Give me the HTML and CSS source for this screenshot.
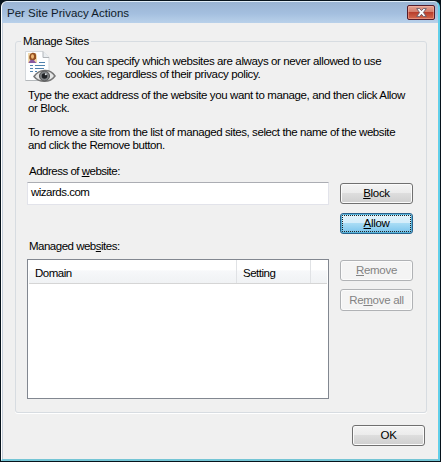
FILE: index.html
```html
<!DOCTYPE html>
<html lang="en">
<head>
<meta charset="utf-8">
<title>Per Site Privacy Actions</title>
<link rel="stylesheet" href="styles.css">
</head>
<body>
<div class="window">
  <header class="titlebar">
    <h1>Per Site Privacy Actions</h1>
    <button class="close" aria-label="Close">
      <svg width="11" height="9" viewBox="0 0 11 9"><path d="M.7.6h3L5.5 2.7 7.3.6h3L7.400 4.500l2.900 3.900h-3L5.500 6.300 3.700 8.400h-3l2.900-3.900z" fill="#fff" stroke="#655765" stroke-width=".9"/></svg>
    </button>
  </header>
  <main>
    <fieldset class="group">
      <legend>Manage Sites</legend>
      <div class="intro">
        <svg class="doc" width="32" height="34" viewBox="0 0 32 34">
          <path d="M.5 1.500h17.500l6 6v23H.5z" fill="#fdfeff" stroke="#d4d8dc"/>
          <path d="M18 1.500v6h6" fill="#e9edf0" stroke="#b0b4b8"/>
          <path d="M.5 30.500h22" stroke="#b4b8bb"/>
          <path d="M3 13V3h8l1 3v7z" fill="#f0d9ad"/>
          <path d="M4.500 9C3 2 10.500 1 11 5v3.500L9 10.500H6z" fill="#955022"/>
          <ellipse cx="7.500" cy="6.500" rx="1.500" ry="2.200" fill="#efb978"/>
          <path d="M3.500 13c1-3 3-4 5-3l3 3z" fill="#8758a0"/>
          <path d="M14 12.500h6M10 15.500h10M10 18.500h9M10 21.500h2M5 15.500h3M5 18.500h3M5 21.500h3" stroke="#4e82ae"/>
          <path d="M9 26.500c5-7.500 16-8.500 21-.5-5 7-16 7-21 .5z" fill="#e6e7e7" stroke="#777" stroke-width="1.500"/>
          <circle cx="19.500" cy="26" r="5" fill="#7c8083" stroke="#555"/>
          <circle cx="19.500" cy="26" r="2.800" fill="#202326"/>
          <circle cx="20.800" cy="24.300" r="1" fill="#dfe3e5"/>
        </svg>
        <p>You can specify which websites are always or never allowed to use<br>cookies, regardless of their privacy policy.</p>
      </div>
      <p class="type">Type the exact address of the website you want to manage, and then click Allow<br>or Block.</p>
      <p class="remove">To remove a site from the list of managed sites, select the name of the website<br>and click the Remove button.</p>
      <div class="columns">
        <div class="fields">
          <label>Address of <u>w</u>ebsite:</label>
          <div class="input">wizards.com</div>
          <label class="managed">Managed web<u>s</u>ites:</label>
          <div class="list">
            <div class="head">
              <div class="domain">Domain</div>
              <div class="setting">Setting</div>
              <div class="rest"></div>
            </div>
          </div>
        </div>
        <div class="actions">
          <button class="btn"><u>B</u>lock</button>
          <button class="btn allow"><u>A</u>llow</button>
          <button class="btn disabled first" disabled><u>R</u>emove</button>
          <button class="btn disabled all" disabled>Re<u>m</u>ove all</button>
        </div>
      </div>
    </fieldset>
    <footer><button class="btn">OK</button></footer>
  </main>
</div>
</body>
</html>
```
FILE: styles.css
```css
* { box-sizing: border-box; }
body {
  margin: 0;
  background: #07131c;
  font: 11.5px/13px "Liberation Sans", Arial, sans-serif;
  letter-spacing: -.38px;
  color: #000;
  overflow: hidden;
}
p, h1 { margin: 0; font: inherit; white-space: nowrap; }
u { text-decoration: underline; text-underline-offset: 1px; text-decoration-thickness: 1px; text-decoration-skip-ink: none; }
button { font: inherit; letter-spacing: -.3px; color: inherit; padding: 0; }
.window {
  width: 439px;
  height: 460px;
  margin-left: 1px;
  margin-top: 1px;
  border: 1px solid #e0edf8;
  border-left-color: #fff;
  border-right: 2px solid #62cfea;
  border-bottom: 2px solid #74c5d5;
  border-radius: 6px 6px 0 0;
  background: #f0f0f0;
  overflow: hidden;
}
.titlebar {
  display: flex;
  justify-content: space-between;
  height: 21px;
  padding: 0 3px 0 5px;
  background: linear-gradient(#9ab4d3, #a4bfdf 55%, #b9d1ea);
}
.titlebar h1 { padding-top: 5px; letter-spacing: 0; color: #101c2a; }
.close {
  display: flex;
  align-items: center;
  justify-content: center;
  width: 28px;
  height: 15px;
  margin-top: 3px;
  border: 1px solid #541c2b;
  border-radius: 2px;
  background: linear-gradient(#e3a192, #d37c6b 46%, #b93f2d 50%, #d4694e);
  box-shadow: inset 0 0 0 1px rgba(255, 190, 175, .45);
}
main {
  height: 436px;
  padding: 12px 10px 0 12px;
  border-left: 1px solid #c4cdd9;
  border-right: 1px solid #f9eee6;
}
.group {
  min-width: 0;
  width: 412px;
  height: 378px;
  margin: 0;
  padding: 0 0 0 12px;
  border: 1px solid #d7dce1;
  border-radius: 3px;
  box-shadow: 0 1px #fff;
}
legend { height: 13px; margin-left: -7px; padding: 0 2px; white-space: nowrap; }
.intro { display: flex; height: 41px; margin-left: -3px; }
.doc { margin-top: 2px; }
.intro p { padding: 7px 0 0 8px; }
.type { height: 37px; }
.remove { height: 39px; letter-spacing: -.41px; }
.columns { display: flex; gap: 11px; }
.fields { width: 302px; margin-left: -1px; letter-spacing: -.5px; }
.fields label { display: block; height: 17px; padding-left: 2px; }
.input {
  height: 23px;
  padding: 3px 0 0 3px;
  background: #fff;
  border: 1px solid #e2e3ea;
  border-top-color: #abadb3;
}
.fields .managed { height: 19px; margin-top: 35px; }
.list { height: 140px; border: 1px solid #828790; background: #fff; }
.head {
  display: flex;
  height: 24px;
  margin: 0 1px;
  border-bottom: 1px solid #d5d5d5;
  background: linear-gradient(#fff 45%, #f7f8fa 46%, #f0f2f4);
}
.head > div { padding-top: 7px; border-right: 1px solid #e0e2e5; }
.domain { width: 208px; padding-left: 6px; }
.setting { width: 74px; padding-left: 6px; }
.head .rest { flex: 1; border: 0; }
.actions { width: 73px; padding-top: 18px; }
.btn {
  display: block;
  width: 73px;
  height: 21px;
  border: 1px solid #707070;
  border-radius: 3px;
  background: linear-gradient(#f4f4f4, #ebebeb 48%, #dddddd 50%, #cfcfcf);
  box-shadow: inset 0 0 0 1px #fbfbfb;
  text-align: center;
  white-space: nowrap;
}
.allow {
  margin-top: 9px;
  border-color: #2c628b;
  background: linear-gradient(#e3f4fc, #d3edfa 48%, #a8dcf5 50%, #78c3ec);
  box-shadow: inset 0 0 0 1px #59b5dc;
  outline: 1px dotted #222;
  outline-offset: -3px;
}
.disabled { border-color: #b0b2b5; background: #f4f4f4; color: #838383; }
.first { margin-top: 26px; }
.all { height: 22px; margin-top: 8px; }
footer { display: flex; justify-content: flex-end; padding: 12px 2px 0 0; }
```
